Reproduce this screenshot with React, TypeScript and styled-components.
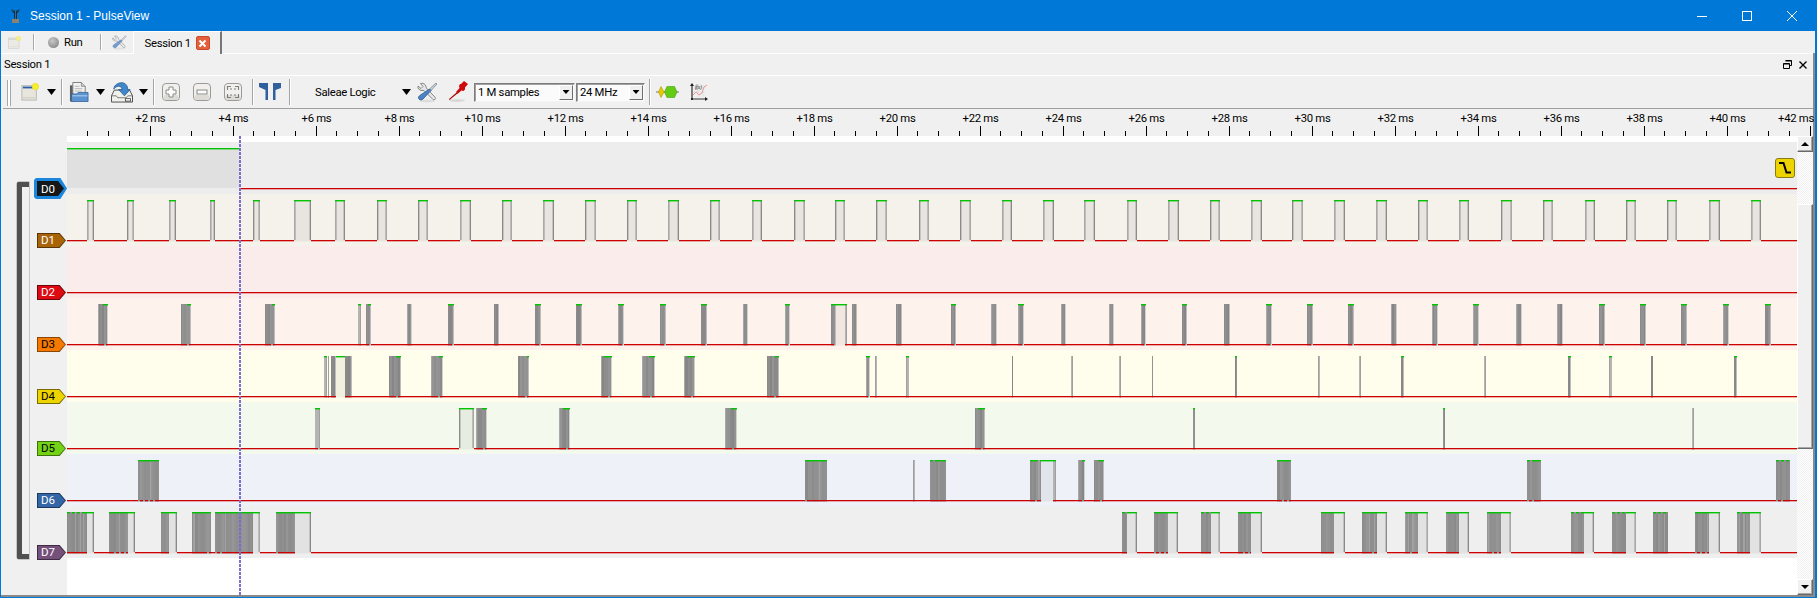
import React from "react";
import styled, { createGlobalStyle } from "styled-components";

const UI_FONT = `"Roboto", "Liberation Sans", sans-serif`;

const Global = createGlobalStyle`
  html, body { margin: 0; padding: 0; background: #f0f0f0; }
  body { font-family: ${UI_FONT}; font-size: 11.3px; letter-spacing: -0.3px; color: #000; overflow: hidden; }
  #root { width: 1817px; height: 598px; }
`;

const Window = styled.div`
  width: 1817px; height: 598px; box-sizing: border-box; overflow: hidden;
  border-left: 1px solid #0078d7; border-right: 2px solid #0078d7; border-bottom: 1px solid #0078d7;
  display: flex; flex-direction: column; background: #f0f0f0; position: relative;
`;
const TitleBar = styled.div`
  height: 31px; flex: none; margin-left: -1px; margin-right: -2px; background: #0078d7; color: #fff;
  display: flex; align-items: center; padding-left: 10px;
`;
const TitleText = styled.span`
  margin-left: 9px; font-family: "Liberation Sans", sans-serif; font-size: 12px; letter-spacing: 0;
`;
const WinButtons = styled.div`
  margin-left: auto; display: flex; align-items: center; padding-right: 20px; gap: 35px;
`;
const TabStrip = styled.div`
  height: 22px; flex: none; display: flex; align-items: stretch; background: #f0f0f0;
`;
const StripItem = styled.div<{ $ml?: number }>`
  display: flex; align-items: center; margin-left: ${p => p.$ml ?? 0}px;
`;
const StripSep = styled.div<{ $ml: number }>`
  width: 1px; margin: 3px 0 3px ${p => p.$ml}px; background: #a8a8a8; box-shadow: 1px 0 0 #fff;
`;
const RunText = styled.span` margin-left: 5px; `;
const RunDot = styled.span`
  width: 11px; height: 11px; border-radius: 50%;
  background: radial-gradient(circle at 40% 35%, #c8c8c8, #8a8a8a 80%);
`;
const ActiveTab = styled.div`
  margin-left: 6px; width: 89px; flex: none; box-sizing: border-box; height: 23px; padding-left: 11px;
  border-top: 1px solid #fff; border-left: 1px solid #fff; border-right: 2px solid #777;
  background: #f0f0f0; display: flex; align-items: center; position: relative; z-index: 1;
  border-top-left-radius: 2px;
`;
const TabClose = styled.span`
  width: 14px; height: 14px; flex: none; margin-left: 5px; box-sizing: border-box; background: #e4603c; border: 1px solid #c84c2c;
  border-radius: 2px; display: flex; align-items: center; justify-content: center;
`;
const Dock = styled.div`
  flex: 1; min-height: 0; display: flex; flex-direction: column;
  border-right: 2px solid #8a8a8a; border-bottom: 2px solid #8a8a8a;
`;
const DockTitle = styled.div`
  height: 23px; flex: none; box-sizing: border-box; border-top: 1px solid #fff; border-bottom: 1px solid #fff;
  display: flex; align-items: center; padding: 0 3px;
`;
const DockButtons = styled.div` margin-left: auto; display: flex; align-items: center; gap: 7px; padding-right: 3px; `;
const Toolbar = styled.div`
  height: 33px; flex: none; box-sizing: border-box; border-bottom: 1px solid #a0a0a0; margin-left: 2px;
  display: flex; align-items: center; padding-left: 4px;
`;
const Handle = styled.div`
  width: 4px; height: 26px; flex: none; box-sizing: border-box; border-left: 1px solid #a6a6a6; border-right: 1px solid #a6a6a6;
  background: #fff; margin-top: 1px;
`;
const Tool = styled.div<{ $ml: number; $w: number }>`
  width: ${p => p.$w}px; margin-left: ${p => p.$ml}px; flex: none;
  display: flex; align-items: center; justify-content: center;
`;
const Arrow = styled.div<{ $ml: number }>`
  margin-left: ${p => p.$ml}px; flex: none; width: 9px; height: 6px; background: #000;
  clip-path: polygon(0 0, 100% 0, 50% 100%);
`;
const Sep = styled.div<{ $ml: number }>`
  width: 1px; height: 26px; flex: none; margin-left: ${p => p.$ml}px; background: #a6a6a6; box-shadow: 1px 0 0 #fff;
`;
const DeviceName = styled.div`
  margin-left: 25px; width: 62px; flex: none; white-space: nowrap;
`;
const Combo = styled.div<{ $ml: number; $w: number }>`
  margin-left: ${p => p.$ml}px; width: ${p => p.$w}px; height: 19px; flex: none; box-sizing: border-box;
  border: 1px solid; border-color: #7d7d7d #f4f4f4 #f4f4f4 #7d7d7d; background: #fbfbfb;
  display: flex; align-items: center; padding-left: 3px; box-shadow: inset 1px 1px 0 #a0a0a0;
`;
const ComboButton = styled.div`
  margin-left: auto; margin-right: 1px; width: 14px; height: 15px; box-sizing: border-box; background: #f0f0f0;
  border: 1px solid; border-color: #fff #6e6e6e #6e6e6e #fff; display: flex; align-items: center; justify-content: center;
`;
const ComboArrow = styled.span`
  width: 7px; height: 4px; background: #000; clip-path: polygon(0 0, 100% 0, 50% 100%);
`;
const RulerWrap = styled.div` padding-left: 2px; flex: none; `;
const Ruler = styled.svg`
  display: block; width: 1812px; height: 27px;
`;
const Main = styled.div` flex: 1; min-height: 0; display: flex; position: relative; `;
const Traces = styled.div` width: 1796px; flex: none; display: flex; flex-direction: column; `;
const Row = styled.div<{ $h: number }>` height: ${p => p.$h}px; flex: none; display: flex; `;
const Gutter = styled.div`
  width: 66px; flex: none; background: #f0f0f0; display: flex; justify-content: flex-end; align-items: flex-start;
  box-sizing: border-box;
`;
const BlankTrace = styled.div` flex: 1; background: #fff; `;
const TraceSvg = styled.svg<{ $bg: string }>` display: block; width: 1730px; height: 52px; flex: none; background: ${p => p.$bg}; `;

const TAG = "polygon(0 0, 78% 0, 100% 50%, 78% 100%, 0 100%)";
const TagOuter = styled.div<{ $edge: string; $mt: number }>`
  position: relative; width: 29px; height: 15px; margin-top: ${p => p.$mt}px; margin-right: 1px; background: ${p => p.$edge};
  clip-path: ${TAG}; flex: none;
`;
const TagInner = styled.div<{ $bg: string; $fg: string }>`
  position: absolute; inset: 1px; background: ${p => p.$bg}; color: ${p => p.$fg}; clip-path: ${TAG};
  display: flex; align-items: center; padding-left: 3px; font-size: 11.5px; line-height: 13px; letter-spacing: 0;
`;
const SelectedRing = styled.div`
  width: 33px; height: 21px; margin-top: 36px; background: #1a86de; display: flex; align-items: center; padding-left: 3px;
  box-sizing: border-box; clip-path: polygon(2px 0, 80% 0, 100% 50%, 80% 100%, 2px 100%, 0 90%, 0 10%);
`;
const SelectedTag = styled.div`
  width: 27px; height: 15px; background: #15181a; color: #fff; clip-path: ${TAG}; display: flex; align-items: center; padding-left: 4px;
  font-size: 11.5px; letter-spacing: 0; box-sizing: border-box;
`;
const Bracket = styled.div`
  position: absolute; left: 16px; top: 46px; width: 12px; height: 377px; box-sizing: border-box;
  border: 5px solid #505050; border-right: none; border-radius: 2px 0 0 2px; box-shadow: 0 0 0 0.5px #9a9a9a;
`;
const Cursor = styled.div`
  position: absolute; left: 238px; top: 0; bottom: 0; width: 2px;
  background: repeating-linear-gradient(to bottom, #7a70d4 0 3px, transparent 3px 4px);
`;
const Trigger = styled.div`
  position: absolute; left: 1774px; top: 22px; width: 20px; height: 20px; box-sizing: border-box;
  background: #edd400; border: 1px solid #8a7b10; border-radius: 3px; display: flex; align-items: center; justify-content: center;
`;
const ScrollBar = styled.div`
  width: 16px; flex: none; display: flex; flex-direction: column;
  background: repeating-conic-gradient(#f0f0f0 0 25%, #ffffff 0 50%) 0 0 / 2px 2px;
`;
const ScrollBtn = styled.div`
  height: 16px; flex: none; box-sizing: border-box; background: #f0f0f0;
  border: 1px solid; border-color: #fff #6a6a6a #6a6a6a #fff; box-shadow: inset -1px -1px 0 #a8a8a8;
  display: flex; align-items: center; justify-content: center;
`;
const Thumb = styled.div`
  height: 245px; flex: none; margin-top: 52px; box-sizing: border-box; background: #f0f0f0;
  border: 1px solid; border-color: #fff #6a6a6a #6a6a6a #fff; box-shadow: inset -1px -1px 0 #a8a8a8;
`;
const Track = styled.div` flex: 1; `;
const UpTri = styled.span`
  width: 8px; height: 4px; background: #000; clip-path: polygon(50% 0, 100% 100%, 0 100%);
`;
const DownTri = styled.span`
  width: 8px; height: 4px; background: #000; clip-path: polygon(0 0, 100% 0, 50% 100%);
`;

/* ---------- waveform data ---------- */
type Pulse = [number, number, "l" | "d" | "g" | "s" | "p", number?];
const HIGH = 6, LOW = 46, X0 = 67, X1 = 1797;

const d1: Pulse[] = [[87,94],[127,134],[169,176],[210,215],[253,260],[294,311],[335,345],[377,387],[418,428],[460,471],[502,512],[543,554],[585,596],[627,637],[668,679],[710,720],[752,762],[794,805],[835,845],[876,887],[919,929],[960,971],[1002,1012],[1043,1054],[1084,1095],[1127,1137],[1168,1179],[1210,1220],[1251,1262],[1292,1303],[1334,1345],[1376,1387],[1418,1428],[1459,1469],[1501,1512],[1543,1553],[1585,1595],[1626,1636],[1667,1677],[1709,1720],[1751,1761]].map(([a,b]) => [a,b,"l"] as Pulse);
const d: (a:number,b:number,c?:number)=>Pulse = (a,b,c=0) => [a,b,"d",c];
const g: (a:number,b:number,c?:number)=>Pulse = (a,b,c=0) => [a,b,"g",c];
const l: (a:number,b:number)=>Pulse = (a,b) => [a,b,"l"];
const s: (a:number,b:number)=>Pulse = (a,b) => [a,b,"s"];

const d3: Pulse[] = [d(98,108,.5),d(181,191,.4),d(265,275,.3),g(358,361,1),d(366,371,.6),d(407,412),d(448,454,1),d(494,499),d(535,541,1),d(576,582,1),d(618,624,1),d(660,666,1),d(701,707,1),d(743,748),d(785,790,1),d(831,836,1),l(836,845),g(845,847,1),d(852,857),d(896,902),d(951,956,1),d(991,997),d(1018,1024,1),d(1061,1066),d(1109,1114),d(1141,1146,1),d(1182,1187,1),d(1224,1230),d(1266,1272,1),d(1307,1313,1),d(1348,1354,1),d(1391,1397),d(1432,1438,1),d(1473,1479,1),d(1516,1522),d(1557,1563),d(1599,1605,1),d(1640,1646,1),d(1681,1687,1),d(1723,1729,1),d(1765,1771,1)];
const d4: Pulse[] = [g(324,327,1),g(328,329),d(331,336),l(336,345),d(345,352),d(389,401,.4),d(431,443,.3),d(518,529,.2),d(601,612,.7),d(642,655,.5),d(684,695,.7),d(767,779,.35),d(866,870,1),g(875,877),g(906,909,1),d(1012,1013),g(1071,1073),g(1119,1121),d(1152,1153),d(1235,1237,1),g(1318,1320),g(1359,1361),d(1401,1404,1),g(1484,1486),d(1568,1571,1),g(1609,1612,1),d(1651,1653),d(1734,1737,1)];
const d5: Pulse[] = [g(315,320,1),l(459,474),d(476,487,.5),d(559,570,.6),d(725,737,.5),d(975,985,.7),d(1193,1195,1),d(1443,1445,1),g(1692,1694)];
const d6: Pulse[] = [s(138,159),s(805,827),g(913,915),s(930,946),s(1030,1041),l(1041,1053),g(1053,1056,1),d(1078,1085,.5),d(1094,1104,.6),s(1277,1291),s(1527,1541),s(1776,1790)];
const d7: Pulse[] = [s(67,87),l(87,94),s(109,128),l(128,135),s(161,169),l(169,177),s(192,211),s(215,253),l(253,260),s(276,295),l(295,311),
  s(1122,1127),l(1127,1137),s(1154,1168),l(1168,1178),s(1201,1211),l(1211,1220),s(1238,1251),l(1251,1262),s(1321,1334),l(1334,1345),s(1362,1377),l(1377,1387),s(1405,1418),l(1418,1428),s(1446,1459),l(1459,1469),s(1487,1501),l(1501,1511),s(1571,1584),l(1584,1594),s(1612,1626),l(1626,1636),s(1653,1668),s(1695,1709),l(1709,1720),s(1737,1750),l(1750,1761)];

const channels = [
  { name: "D0", bg: "#ededed", tag: "#000", edge: "#000", fg: "#fff", pulses: [[67,239,"p"]] as Pulse[] },
  { name: "D1", bg: "#f5f1eb", tag: "#a9640a", edge: "#5c3606", fg: "#fff", pulses: d1 },
  { name: "D2", bg: "#fbecec", tag: "#dd0a12", edge: "#6e0508", fg: "#fff", pulses: [] as Pulse[] },
  { name: "D3", bg: "#fef3ec", tag: "#f57900", edge: "#8a4500", fg: "#000", pulses: d3 },
  { name: "D4", bg: "#fffeec", tag: "#edd400", edge: "#7a6d00", fg: "#000", pulses: d4 },
  { name: "D5", bg: "#f3f9ec", tag: "#73d216", edge: "#3f7408", fg: "#000", pulses: d5 },
  { name: "D6", bg: "#eef1f7", tag: "#3465a4", edge: "#1c3a60", fg: "#fff", pulses: d6 },
  { name: "D7", bg: "#efefef", tag: "#75507b", edge: "#3e2a42", fg: "#fff", pulses: d7 },
];

const hash = (n: number) => ((n * 2654435761) >>> 7) % 997;
const SOFT = ["#8a8a8a", "#8e8e8e", "#929292", "#949494", "#868686"];
const DENSE = ["#8c8c8c", "#8e8e8e", "#929292", "#969696", "#8a8a8a", "#909090"];

function Waveform({ pulses, bg }: { pulses: Pulse[]; bg: string }) {
  const cols: React.ReactNode[] = [];
  const greens: [number, number][] = [];
  const gaps: [number, number][] = [];
  pulses.forEach((p, i) => {
    const [a, b, kind, cap = 0] = p;
    const prevTouch = i > 0 && pulses[i - 1][1] === a;
    const nextTouch = i < pulses.length - 1 && pulses[i + 1][0] === b;
    const h = LOW + 1.5 - HIGH;
    if (kind === "p") {
      cols.push(<rect key={`${i}f`} x={a} y={HIGH} width={b - a} height={LOW - HIGH} fill="rgba(0,0,0,.055)" />);
      greens.push([a, b]);
      gaps.push([a, b]);
    } else if (kind === "l") {
      cols.push(<rect key={`${i}f`} x={a} y={HIGH} width={b - a} height={h} fill="rgba(0,0,0,.05)" />);
      const flip = hash(a) % 2 === 0;
      if (!prevTouch) {
        cols.push(<rect key={`${i}a`} x={a} y={HIGH} width={1} height={LOW - HIGH} fill={flip ? "#8a8a8a" : "#a8a8a8"} />);
        cols.push(<rect key={`${i}a2`} x={a + 1} y={HIGH} width={1} height={LOW - HIGH} fill={flip ? "rgba(0,0,0,.14)" : "#bcbcb8"} />);
      }
      if (!nextTouch) {
        cols.push(<rect key={`${i}b`} x={b - 1} y={HIGH} width={1} height={LOW - HIGH} fill={flip ? "#a8a8a8" : "#8a8a8a"} />);
        cols.push(<rect key={`${i}b2`} x={b - 2} y={HIGH} width={1} height={LOW - HIGH} fill={flip ? "#bcbcb8" : "rgba(0,0,0,.14)"} />);
      }
      greens.push([a, b]);
      gaps.push([a, b]);
    } else if (kind === "g") {
      cols.push(<rect key={`${i}f`} x={a} y={HIGH} width={b - a} height={h} fill="#b4b4b2" />);
      cols.push(<rect key={`${i}f2`} x={a + (hash(a) % 2 ? 0 : b - a - 1)} y={HIGH} width={1} height={h} fill="#a0a0a0" />);
    } else {
      const pal = kind === "s" ? DENSE : SOFT;
      for (let x = a; x < b; x++) {
        let c = pal[hash(Math.floor(x / 2) + a) % pal.length];
        if (kind === "s" && hash(x * 3) % 19 === 0) c = "#a2a2a2";
        if (kind === "d" && b - a > 2 && x === b - 1) c = hash(a) % 2 ? "#bcbcbc" : "#d0d0cc";
        if (kind === "d" && b - a > 2 && x === a) c = hash(a) % 2 ? "#8a8a8a" : "#a8a8a8";
        cols.push(<rect key={`${i}c${x}`} x={x} y={HIGH} width={1} height={h} fill={c} />);
      }
      if (kind === "s") {
        for (let x = a; x < b; x += 5) {
          greens.push([x, Math.min(b, x + (hash(x) % 3 === 0 ? 3 : 5))]);
          if (hash(x + 11) % 2 === 0 && x + 2 < b) gaps.push([x, x + 2]);
        }
      }
    }
    if ((kind === "d" || kind === "g") && cap > 0) {
      const start = Math.round(b - (b - a) * cap);
      greens.push([start, b]);
      if (b - a > 3) {
        const gs = Math.round(b - (b - a) * 0.4);
        gaps.push([gs, gs + 2]);
      }
    }
  });
  const sorted = [...gaps].sort((x, y) => x[0] - y[0]);
  const lows: [number, number][] = [];
  let cur = X0;
  sorted.forEach(([a, b]) => {
    if (a > cur) lows.push([cur, a]);
    cur = Math.max(cur, b);
  });
  if (cur < X1) lows.push([cur, X1]);
  return (
    <TraceSvg viewBox={`${X0} 0 ${X1 - X0} 52`} $bg={bg}>
      {cols}
      {greens.map(([a, b], i) => <rect key={`h${i}`} x={a} y={HIGH} width={b - a} height={1.4} fill="#00c400" />)}
      {lows.map(([a, b], i) => <rect key={`n${i}`} x={a} y={LOW} width={b - a} height={1.3} fill="#cc0000" />)}
    </TraceSvg>
  );
}

function RulerAxis() {
  const step = 20.75;
  const items: React.ReactNode[] = [];
  const off = 3; // svg starts at x=3 of the page
  for (let i = 1; i <= 84; i++) {
    const x = Math.floor(67 + i * step) - off;
    const major = i % 4 === 0;
    items.push(<rect key={i} x={x} y={major ? 17 : 22} width={1} height={major ? 10 : 5} fill="#000" />);
    if (major) {
      const ms = i / 2;
      const cx = ms === 42 ? 1796 - off : x + 0.5;
      items.push(
        <text key={`t${i}`} x={cx} y={13} textAnchor="middle" fontFamily={UI_FONT} fontSize="11.3" fill="#000">{`+${ms} ms`}</text>
      );
    }
  }
  return <Ruler>{items}</Ruler>;
}

/* ---------- icons ---------- */
const PageIcon = ({ faded }: { faded?: boolean }) => (
  <svg width={faded ? 13 : 20} height={faded ? 13 : 20} viewBox="0 0 20 20" opacity={faded ? 0.55 : 1}>
    <rect x="1" y="3" width="16" height="16" fill="#e8e6dc" stroke="#b5b5b0" />
    <rect x="2" y="4" width="14" height="2" fill={faded ? "#bcbcb8" : "#2a5ea8"} />
    <rect x="2" y="16" width="14" height="1" fill="#c8c8c0" />
    <circle cx="16" cy="4" r="3.6" fill="#f6ee30" stroke="#e6d820" strokeWidth=".6" />
  </svg>
);
const FolderIcon = () => (
  <svg width="21" height="22" viewBox="0 0 21 22">
    <path d="M1 4h3v17H1z" fill="#5e5e5e" />
    <path d="M4 1h9l4 4v9H4z" fill="#f2f2f2" stroke="#6f6f6f" strokeWidth=".9" />
    <path d="M13 1v4h4" fill="#cfcfcf" stroke="#6f6f6f" strokeWidth=".7" />
    <path d="M6 5h5M6 7.500h8M6 10h8" stroke="#a6a6a6" strokeWidth=".8" />
    <path d="M2.500 13h6l1-1.500h10.500V21H2.500z" fill="#5b92d0" stroke="#2f5f98" strokeWidth=".8" />
    <path d="M3.500 15h16" stroke="#a4c6ea" strokeWidth="1.300" />
  </svg>
);
const SaveIcon = () => (
  <svg width="23" height="22" viewBox="0 0 23 22">
    <path d="M.5 15l3-6h16l3 6v6.500H.5z" fill="#f0f0ec" stroke="#4a4a4a" strokeWidth="1" />
    <path d="M.5 15h5l1.500 2h9l1.500-2h5" fill="none" stroke="#6a6a6a" strokeWidth=".9" />
    <rect x="15" y="18" width="5.500" height="2.500" fill="#fff" stroke="#333" strokeWidth=".8" />
    <path d="M3 8C3 3 9 .5 13 1.500c3 .8 4.500 3.500 4.500 7H20l-6 6.500-6-6.500h3.500c0-2.500-1.500-3.500-3.500-3.500-2.500 0-3.500 1.500-5 2.500z" fill="#3f87c9" stroke="#25598f" strokeWidth=".8" />
  </svg>
);
const ZoomTile = ({ kind }: { kind: "in" | "out" | "fit" }) => (
  <svg width="18" height="18" viewBox="0 0 18 18">
    <rect x=".5" y=".5" width="17" height="17" rx="3.500" fill="#f1f0ed" stroke="#9a9a96" />
    <rect x="1.500" y="12" width="15" height="5" rx="2" fill="#dcdbd6" />
    {kind === "in" && <path d="M7 4h4v3h3v4h-3v3H7v-3H4V7h3z" fill="#fbfbfb" stroke="#8a8a8a" />}
    {kind === "out" && <rect x="4" y="7" width="10" height="4" fill="#fbfbfb" stroke="#8a8a8a" />}
    {kind === "fit" && <path d="M3.500 7V3.500H7M11 3.500h3.500V7M14.500 11v3.500H11M7 14.500H3.500V11M6 6h2M10 6h2M6 12h2M10 12h2" fill="none" stroke="#7e7e7e" strokeWidth="1.100" />}
  </svg>
);
const FlagsIcon = () => (
  <svg width="22" height="18" viewBox="0 0 22 18">
    <path d="M0 0h9v17H6.500V7L0 4z" fill="#2f5f9c" />
    <path d="M14 0h8v5l-5.500 2v10H14z" fill="#2f5f9c" />
  </svg>
);
const ToolsIcon = ({ small }: { small?: boolean }) => (
  <svg width={small ? 15 : 21} height={small ? 15 : 21} viewBox="0 0 21 21" opacity={small ? 0.75 : 1}>
    <ellipse cx="10" cy="19" rx="8" ry="1.500" fill="#ddd" />
    <path d="M1 4l3 2.500 2-2-2.500-3c2.500-.8 5 .5 5.500 3l.3 1.500 9 9.500c1 1.200-1.200 3.200-2.300 2L7 8.500 5 8.500C2 8.300.5 6.500 1 4z" fill="#e6e6e6" stroke="#7d7d7d" strokeWidth=".9" />
    <path d="M19 1l1 1-6 6.500-1.500-1.500z" fill="#cfd6de" stroke="#6d7a8a" strokeWidth=".7" />
    <path d="M12.500 7l1.500 1.500-8 8.500c-1 1.200-3 1.200-4 0s-.5-2.500.5-3.300z" fill="#4d84c4" stroke="#2a5a94" strokeWidth=".8" />
  </svg>
);
const ProbeIcon = () => (
  <svg width="20" height="22" viewBox="0 0 20 22">
    <ellipse cx="9" cy="19.500" rx="8" ry="1.500" fill="#d8d8d8" />
    <path d="M20 3l-4-3-3 3-1 0-1 2 .5 2L8 11l1.500 2 4-3.500 2 .5 1.500-1.500 0-2z" fill="#cc0b0b" />
    <path d="M8.500 11.500L1 18l.5 1 8-6.500z" fill="#a80808" />
  </svg>
);
const DecoderIcon = () => (
  <svg width="23" height="12" viewBox="0 0 23 12">
    <path d="M0 6h23" stroke="#777" strokeWidth="1" />
    <path d="M5 .5L8 6l-3 5.500L2.500 6z" fill="#e6c800" stroke="#b09a00" strokeWidth=".6" />
    <path d="M8.500 6l2.500-5.500h7.500L21 6l-2.500 5.500H11z" fill="#64cc12" stroke="#4a9a0e" strokeWidth=".6" />
  </svg>
);
const MathIcon = () => (
  <svg width="19" height="18" viewBox="0 0 19 18">
    <path d="M2 1v15h15" fill="none" stroke="#333" strokeWidth="1.200" />
    <path d="M0 3l2-3 2 3zM15 14l3 2-3 2z" fill="#222" />
    <path d="M3 12l3-3 3 3 3-2 2-6 3-2" fill="none" stroke="#ee9090" strokeWidth="1" />
    <path d="M3 9h12M3 5h12M8 2v12M13 2v12" stroke="#ccc" strokeWidth=".4" />
    <rect x="1" y="15" width="2" height="2" fill="#222" />
    <text x="5" y="6" fontSize="5.500" fontFamily="Liberation Serif, serif" fontStyle="italic" fill="#222">f(x)</text>
  </svg>
);
const AppIcon = () => (
  <svg width="11" height="16" viewBox="0 0 11 16">
    <path d="M1 1l4.500 2 4.500-2-2 4H3z" fill="#18405e" />
    <path d="M4 3h3v8H4z" fill="#2a2a2a" />
    <path d="M5.500 3v8" stroke="#1c6fb4" strokeWidth="1" />
    <path d="M2 11h7v4H2z" fill="#8a8270" />
  </svg>
);

export default function App() {
  return (
    <>
      <Global />
      <Window>
        <TitleBar>
          <AppIcon />
          <TitleText>Session 1 - PulseView</TitleText>
          <WinButtons>
            <svg width="10" height="10" viewBox="0 0 10 10"><rect y="5" width="10" height="1" fill="#fff" /></svg>
            <svg width="10" height="10" viewBox="0 0 10 10"><rect x=".5" y=".5" width="9" height="9" fill="none" stroke="#fff" /></svg>
            <svg width="10" height="10" viewBox="0 0 10 10"><path d="M0 0l10 10M10 0L0 10" stroke="#fff" strokeWidth="1" /></svg>
          </WinButtons>
        </TitleBar>

        <TabStrip>
          <StripItem $ml={7}><PageIcon faded /></StripItem>
          <StripSep $ml={12} />
          <StripItem $ml={14}><RunDot /><RunText>Run</RunText></StripItem>
          <StripSep $ml={17} />
          <StripItem $ml={11}><ToolsIcon small /></StripItem>
          <ActiveTab>
            Session 1
            <TabClose>
              <svg width="9" height="9" viewBox="0 0 9 9"><path d="M1.500 1.500l6 6M7.500 1.500l-6 6" stroke="#fff" strokeWidth="2" /></svg>
            </TabClose>
          </ActiveTab>
        </TabStrip>

        <Dock>
          <DockTitle>
            Session 1
            <DockButtons>
              <svg width="9" height="9" viewBox="0 0 9 9"><path d="M2.500.5h6v5h-2M.5 3.500h6v5h-6z" fill="none" stroke="#000" /><path d="M2.500 1h6M.5 4h6" stroke="#000" /></svg>
              <svg width="8" height="8" viewBox="0 0 8 8"><path d="M.5.5l7 7M7.500.5l-7 7" stroke="#000" strokeWidth="1.300" /></svg>
            </DockButtons>
          </DockTitle>
          <Toolbar>
            <Handle />
            <Tool $ml={10} $w={18}><PageIcon /></Tool>
            <Arrow $ml={8} />
            <Sep $ml={5} />
            <Tool $ml={7} $w={20}><FolderIcon /></Tool>
            <Arrow $ml={7} />
            <Tool $ml={6} $w={22}><SaveIcon /></Tool>
            <Arrow $ml={6} />
            <Sep $ml={5} />
            <Tool $ml={8} $w={18}><ZoomTile kind="in" /></Tool>
            <Tool $ml={13} $w={18}><ZoomTile kind="out" /></Tool>
            <Tool $ml={13} $w={18}><ZoomTile kind="fit" /></Tool>
            <Sep $ml={10} />
            <Tool $ml={6} $w={22}><FlagsIcon /></Tool>
            <Sep $ml={8} />
            <DeviceName>Saleae Logic</DeviceName>
            <Arrow $ml={25} />
            <Tool $ml={6} $w={21}><ToolsIcon /></Tool>
            <Tool $ml={10} $w={20}><ProbeIcon /></Tool>
            <Combo $ml={6} $w={101}>1 M samples<ComboButton><ComboArrow /></ComboButton></Combo>
            <Combo $ml={1} $w={69}>24 MHz<ComboButton><ComboArrow /></ComboButton></Combo>
            <Sep $ml={4} />
            <Tool $ml={6} $w={23}><DecoderIcon /></Tool>
            <Tool $ml={11} $w={19}><MathIcon /></Tool>
          </Toolbar>
          <RulerWrap><RulerAxis /></RulerWrap>
          <Main>
            <Traces>
              <Row $h={6}><Gutter /><BlankTrace /></Row>
              {channels.map((c, i) => (
                <Row key={c.name} $h={52}>
                  <Gutter>
                    {i === 0 ? (
                      <SelectedRing><SelectedTag>{c.name}</SelectedTag></SelectedRing>
                    ) : (
                      <TagOuter $edge={c.edge} $mt={39}>
                        <TagInner $bg={c.tag} $fg={c.fg}>{c.name}</TagInner>
                      </TagOuter>
                    )}
                  </Gutter>
                  <Waveform pulses={c.pulses} bg={c.bg} />
                </Row>
              ))}
              <Row $h={37}><Gutter /><BlankTrace /></Row>
            </Traces>
            <ScrollBar>
              <ScrollBtn><UpTri /></ScrollBtn>
              <Thumb />
              <Track />
              <ScrollBtn><DownTri /></ScrollBtn>
            </ScrollBar>
            <Bracket />
            <Cursor />
            <Trigger>
              <svg width="14" height="14" viewBox="0 0 14 14"><path d="M1 2h4.500l3 9.500H13" fill="none" stroke="#000" strokeWidth="2" /></svg>
            </Trigger>
          </Main>
        </Dock>
      </Window>
    </>
  );
}
